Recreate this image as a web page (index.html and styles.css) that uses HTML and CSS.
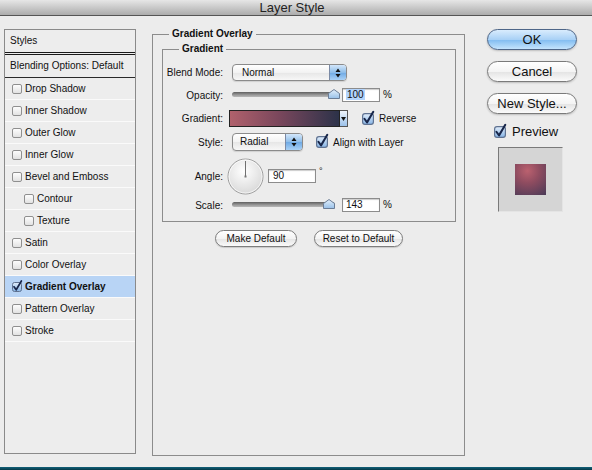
FILE: index.html
```html
<!DOCTYPE html>
<html lang="en">
<head>
    <meta charset="UTF-8">
    <meta name="viewport" content="width=device-width, initial-scale=1.0">
    <title>Layer Style</title>
    <link rel="stylesheet" href="styles.css">
</head>
<body>
    <svg class="svg-defs" width="0" height="0" aria-hidden="true">
        <defs>
            <linearGradient id="cbFill" x1="0" y1="0" x2="0" y2="1">
                <stop offset="0" stop-color="#e2eefb"/>
                <stop offset="1" stop-color="#86b4e6"/>
            </linearGradient>
            <linearGradient id="thumbFill" x1="0" y1="0" x2="0" y2="1">
                <stop offset="0" stop-color="#e4f0fb"/>
                <stop offset="1" stop-color="#98c0e8"/>
            </linearGradient>
            <radialGradient id="dialFill" cx="0.45" cy="0.35" r="0.7">
                <stop offset="0" stop-color="#ffffff"/>
                <stop offset="1" stop-color="#d6d6d6"/>
            </radialGradient>
        </defs>
    </svg>

    <div class="titlebar">Layer Style</div>

    <div class="dialog">
        <div class="styles-list">
            <div class="list-head">Styles</div>
            <div class="list-blend">Blending Options: Default</div>
            <div class="list-item"><span class="cb"></span>Drop Shadow</div>
            <div class="list-item"><span class="cb"></span>Inner Shadow</div>
            <div class="list-item"><span class="cb"></span>Outer Glow</div>
            <div class="list-item"><span class="cb"></span>Inner Glow</div>
            <div class="list-item"><span class="cb"></span>Bevel and Emboss</div>
            <div class="list-item sub"><span class="cb"></span>Contour</div>
            <div class="list-item sub"><span class="cb"></span>Texture</div>
            <div class="list-item"><span class="cb"></span>Satin</div>
            <div class="list-item"><span class="cb"></span>Color Overlay</div>
            <div class="list-item selected">
                <svg class="cb-on" viewBox="0 0 10 10" width="10" height="10"><rect x=".5" y=".5" width="9" height="9" rx="2" fill="url(#cbFill)" stroke="#5f7291"/><path d="M2 4.8 L4.2 7.8 L9.4 -1" fill="none" stroke="#18264a" stroke-width="1.7" stroke-linecap="round" stroke-linejoin="round"/></svg>
                Gradient Overlay
            </div>
            <div class="list-item"><span class="cb"></span>Pattern Overlay</div>
            <div class="list-item"><span class="cb"></span>Stroke</div>
        </div>

        <fieldset class="panel">
            <legend>Gradient Overlay</legend>
            <fieldset class="group">
                <legend>Gradient</legend>

                <div class="row row-blend">
                    <span class="field-label">Blend Mode:</span>
                    <div class="select select-blend">
                        <span class="select-text">Normal</span>
                        <span class="stepper"><svg width="6" height="10" viewBox="0 0 6 10"><path d="M3 0.5 L5.5 4 H0.5Z M3 9.5 L5.5 6 H0.5Z" fill="#111"/></svg></span>
                    </div>
                </div>

                <div class="row row-opacity">
                    <span class="field-label">Opacity:</span>
                    <div class="slider">
                        <div class="track"></div>
                        <svg class="thumb" style="left: 96px" width="12" height="10" viewBox="0 0 12 10"><path d="M0.5 4.5 L6 0.5 L11.5 4.5 V9.5 H0.5 Z" fill="url(#thumbFill)" stroke="#6b7d96"/></svg>
                    </div>
                    <div class="num-input"><span class="sel">100</span></div>
                    <span class="unit">%</span>
                </div>

                <div class="row row-gradient">
                    <span class="field-label">Gradient:</span>
                    <div class="swatch"></div>
                    <div class="swatch-arrow"><svg width="5" height="4" viewBox="0 0 5 4"><path d="M0 0 H5 L2.5 4Z" fill="#111"/></svg></div>
                    <label class="check check-reverse">
                        <svg class="cb-on big" viewBox="0 0 10 10" width="12" height="12"><rect x=".5" y=".5" width="9" height="9" rx="2" fill="url(#cbFill)" stroke="#5f7291"/><path d="M2 4.8 L4.2 7.8 L9.4 -1" fill="none" stroke="#18264a" stroke-width="1.7" stroke-linecap="round" stroke-linejoin="round"/></svg>
                        Reverse
                    </label>
                </div>

                <div class="row row-style">
                    <span class="field-label">Style:</span>
                    <div class="select select-style">
                        <span class="select-text">Radial</span>
                        <span class="stepper"><svg width="6" height="10" viewBox="0 0 6 10"><path d="M3 0.5 L5.5 4 H0.5Z M3 9.5 L5.5 6 H0.5Z" fill="#111"/></svg></span>
                    </div>
                    <label class="check check-align">
                        <svg class="cb-on big" viewBox="0 0 10 10" width="12" height="12"><rect x=".5" y=".5" width="9" height="9" rx="2" fill="url(#cbFill)" stroke="#5f7291"/><path d="M2 4.8 L4.2 7.8 L9.4 -1" fill="none" stroke="#18264a" stroke-width="1.7" stroke-linecap="round" stroke-linejoin="round"/></svg>
                        Align with Layer
                    </label>
                </div>

                <div class="row row-angle">
                    <span class="field-label">Angle:</span>
                    <svg class="dial" width="37" height="37" viewBox="0 0 37 37">
                        <circle cx="18.5" cy="18.5" r="17.5" fill="url(#dialFill)" stroke="#9b9b9b"/>
                        <circle cx="18.5" cy="18.5" r="16.5" fill="none" stroke="#fff" stroke-opacity=".7"/>
                        <line x1="18.5" y1="18.5" x2="18.5" y2="3" stroke="#707070"/>
                        <rect x="17.5" y="17.5" width="2" height="2" fill="#777"/>
                    </svg>
                    <div class="num-input angle-input">90</div>
                    <span class="unit degree">°</span>
                </div>

                <div class="row row-scale">
                    <span class="field-label">Scale:</span>
                    <div class="slider">
                        <div class="track"></div>
                        <svg class="thumb" style="left: 91px" width="12" height="10" viewBox="0 0 12 10"><path d="M0.5 4.5 L6 0.5 L11.5 4.5 V9.5 H0.5 Z" fill="url(#thumbFill)" stroke="#6b7d96"/></svg>
                    </div>
                    <div class="num-input">143</div>
                    <span class="unit">%</span>
                </div>
            </fieldset>

            <div class="defaults">
                <button class="small-btn make-default">Make Default</button>
                <button class="small-btn reset-default">Reset to Default</button>
            </div>
        </fieldset>

        <div class="actions">
            <button class="aqua primary">OK</button>
            <button class="aqua">Cancel</button>
            <button class="aqua">New Style...</button>
            <label class="preview-toggle">
                <svg class="cb-on big" viewBox="0 0 10 10" width="12" height="12"><rect x=".5" y=".5" width="9" height="9" rx="2" fill="url(#cbFill)" stroke="#5f7291"/><path d="M2 4.8 L4.2 7.8 L9.4 -1" fill="none" stroke="#18264a" stroke-width="1.7" stroke-linecap="round" stroke-linejoin="round"/></svg>
                Preview
            </label>
            <div class="preview">
                <div class="preview-swatch"></div>
            </div>
        </div>
    </div>

    <div class="dock-edge"></div>
</body>
</html>
```

FILE: styles.css
```css
body {
    margin: 0;
    width: 592px;
    height: 470px;
    overflow: hidden;
    background: #ececec;
    font-family: 'Liberation Sans', Arial, sans-serif;
    font-size: 10px;
    color: #111;
}
.svg-defs {
    position: absolute;
    width: 0;
    height: 0;
    overflow: hidden;
}
.titlebar {
    height: 15px;
    line-height: 15px;
    padding-right: 8px;
    border-bottom: 1px solid #555;
    background: linear-gradient(#e6e6e6, #acacac);
    text-align: center;
    font-size: 13px;
    color: #222;
}
.dialog {
    display: flex;
    align-items: flex-start;
    height: 451px;
}
.dock-edge {
    height: 3px;
    background: linear-gradient(#13627a, #063847);
}

/* left list */
.styles-list {
    box-sizing: border-box;
    width: 132px;
    height: 425px;
    margin: 13px 0 0 4px;
    border: 1px solid #8a8a8a;
    background: #ededed;
    white-space: nowrap;
    flex: none;
}
.list-head,
.list-blend {
    height: 22px;
    line-height: 22px;
    padding-left: 5px;
}
.list-head {
    border-bottom: 3px double #1a1a1a;
}
.list-blend {
    border-bottom: 1px solid #2a2a2a;
}
.list-item {
    display: flex;
    align-items: center;
    gap: 3px;
    height: 21px;
    padding-left: 7px;
    border-bottom: 1px solid #fafafa;
}
.list-item.sub {
    padding-left: 19px;
}
.list-item.selected {
    background: #b8d4f5;
    font-weight: bold;
}
.cb {
    box-sizing: border-box;
    width: 10px;
    height: 10px;
    border: 1px solid #8f8f8f;
    border-radius: 2px;
    background: linear-gradient(#fdfdfd, #e2e2e2);
    flex: none;
}
.cb-on {
    overflow: visible;
    flex: none;
}

/* main panel */
.panel {
    box-sizing: border-box;
    width: 313px;
    height: 428px;
    margin: 12px 0 0 16px;
    padding: 3px 8px 0 9px;
    border: 1px solid #8c8c8c;
    min-width: 0;
    flex: none;
}
.panel > legend {
    margin-left: 7px;
    padding: 0 3px;
    line-height: 12px;
    font-weight: bold;
}
.group {
    margin: 0;
    padding: 9px 0 9px 0;
    border: 1px solid #8c8c8c;
    min-width: 0;
}
.group > legend {
    margin-left: 16px;
    padding: 0 3px;
    line-height: 12px;
    font-weight: bold;
}
.row {
    display: flex;
    align-items: center;
}
.field-label {
    width: 60px;
    margin-right: 8px;
    text-align: right;
    flex: none;
}
.row-blend { height: 17px; }
.row-opacity { height: 14px; margin-top: 7px; }
.row-gradient { height: 17px; margin-top: 8px; }
.row-style { height: 18px; margin-top: 6px; }
.row-angle { height: 36px; margin-top: 7px; }
.row-scale { height: 14px; margin-top: 4px; }

.select {
    box-sizing: border-box;
    display: flex;
    height: 100%;
    border: 1px solid #8b8b8b;
    border-radius: 4px;
    overflow: hidden;
    background: linear-gradient(#ffffff, #f2f2f2 50%, #e6e6e6 51%, #f7f7f7);
    box-shadow: 0 1px 1px rgba(0, 0, 0, 0.12);
}
.select-blend { width: 115px; margin-left: 1px; }
.select-style { width: 71px; margin-left: 1px; }
.select-text {
    flex: 1;
    padding-left: 9px;
    line-height: 15px;
}
.select-style .select-text {
    padding-left: 7px;
}
.stepper {
    width: 16px;
    display: flex;
    align-items: center;
    justify-content: center;
    border-left: 1px solid #7b8aa5;
    background: linear-gradient(#d3e7fb, #8ebde9 50%, #6ea9e4 51%, #a9d1f6);
}

.slider {
    position: relative;
    width: 110px;
    height: 14px;
    margin-left: 1px;
    flex: none;
}
.track {
    margin-top: 4px;
    width: 103px;
    height: 5px;
    border-radius: 3px;
    background: linear-gradient(#5f5f5f, #9a9a9a 60%, #b8b8b8);
}
.thumb {
    position: absolute;
    top: 1px;
}
.num-input {
    box-sizing: border-box;
    width: 38px;
    height: 14px;
    padding-left: 3px;
    line-height: 12px;
    border: 1px solid #8c8c8c;
    background: #fff;
    box-shadow: inset 0 1px 1px rgba(0, 0, 0, 0.2);
    flex: none;
}
.sel {
    background: #b3d4fc;
    padding: 0 1px;
}
.unit {
    margin-left: 3px;
    align-self: flex-start;
    margin-top: 1px;
}
.degree {
    margin-top: 8px;
    font-size: 9px;
}

.swatch {
    box-sizing: border-box;
    width: 111px;
    height: 17px;
    margin-left: -2px;
    border: 1px solid #222;
    background: linear-gradient(90deg, #b0616c, #7a475c 45%, #2c3249);
    flex: none;
}
.swatch-arrow {
    box-sizing: border-box;
    width: 8px;
    height: 17px;
    border: 1px solid #555;
    border-left: none;
    display: flex;
    align-items: center;
    justify-content: center;
    background: linear-gradient(#eef4fb, #9cc2ea);
    flex: none;
}
.check {
    display: flex;
    align-items: center;
    gap: 5px;
}
.check-reverse { margin-left: 14px; }
.check-align { margin-left: 13px; }

.dial {
    margin-left: -4px;
    flex: none;
}
.angle-input {
    width: 48px;
    margin-left: 4px;
    padding-left: 4px;
}

.defaults {
    display: flex;
    justify-content: center;
    gap: 17px;
    margin-top: 8px;
}
.small-btn {
    box-sizing: border-box;
    height: 17px;
    padding: 0;
    border: 1px solid #7d7d7d;
    border-radius: 9px;
    background: linear-gradient(#ffffff, #f3f3f3 50%, #e4e4e4 51%, #fafafa);
    box-shadow: 0 1px 1px rgba(0, 0, 0, 0.15);
    font-family: inherit;
    font-size: 10px;
    color: #111;
}
.make-default { width: 82px; }
.reset-default { width: 89px; }

/* right column */
.actions {
    display: flex;
    flex-direction: column;
    align-items: flex-start;
    margin: 13px 0 0 22px;
    width: 90px;
}
.aqua {
    box-sizing: border-box;
    width: 90px;
    height: 21px;
    padding: 0;
    border: 1px solid #7a7a7a;
    border-radius: 11px;
    background: linear-gradient(#ffffff, #f4f4f4 50%, #e3e3e3 51%, #fbfbfb);
    box-shadow: 0 1px 2px rgba(0, 0, 0, 0.2);
    font-family: inherit;
    font-size: 13px;
    color: #111;
}
.aqua + .aqua {
    margin-top: 11px;
}
.aqua.primary {
    border-color: #4e6688;
    background: linear-gradient(#d9ecfd, #a9d1f6 50%, #80bbf0 51%, #c4e4fd);
}
.preview-toggle {
    display: flex;
    align-items: center;
    gap: 6px;
    margin: 10px 0 0 7px;
    line-height: 15px;
    font-size: 13px;
}
.preview {
    box-sizing: border-box;
    display: flex;
    align-items: center;
    justify-content: center;
    width: 65px;
    height: 65px;
    margin: 8px 0 0 11px;
    border: 1px solid;
    border-color: #7a7a7a #e4e4e4 #e4e4e4 #7a7a7a;
    background: #d5d5d5;
}
.preview-swatch {
    width: 31px;
    height: 31px;
    background: radial-gradient(circle at 40% 22%, #bb616f 0%, #8f4c60 40%, #4a3a57 100%);
}
```
